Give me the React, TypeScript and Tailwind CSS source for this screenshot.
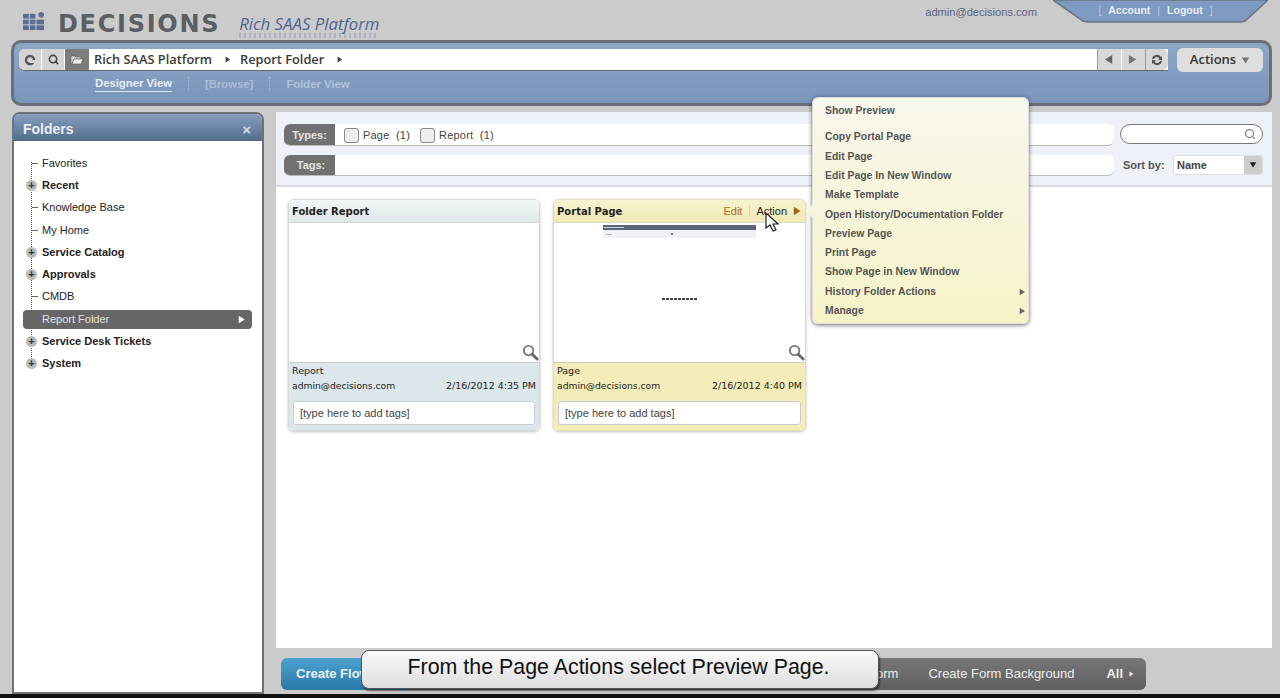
import { Search } from "lucide-react";

const sans = "font-['Liberation_Sans',Arial,sans-serif]";

const folders = [
  { name: "Favorites", bold: false },
  { name: "Recent", bold: true },
  { name: "Knowledge Base", bold: false },
  { name: "My Home", bold: false },
  { name: "Service Catalog", bold: true },
  { name: "Approvals", bold: true },
  { name: "CMDB", bold: false },
  { name: "Report Folder", bold: false, active: true },
  { name: "Service Desk Tickets", bold: true },
  { name: "System", bold: true },
];

const menuItems = [
  "Copy Portal Page",
  "Edit Page",
  "Edit Page In New Window",
  "Make Template",
  "Open History/Documentation Folder",
  "Preview Page",
  "Print Page",
  "Show Page in New Window",
  "History Folder Actions",
  "Manage",
];

function Triangle({ dir, className }: { dir: "left" | "right" | "down"; className: string }) {
  const pts = dir === "left" ? "9,1 9,11 1,6" : dir === "right" ? "1,1 1,11 9,6" : "1,2 11,2 6,10";
  return (
    <svg viewBox="0 0 12 12" className={className}>
      <polygon points={pts} fill="currentColor" />
    </svg>
  );
}

function Magnifier() {
  return (
    <svg viewBox="0 0 18 18" className="absolute bottom-[1px] right-0 h-[17px] w-[17px]">
      <circle cx="7" cy="7" r="5" fill="#fff" stroke="#777" strokeWidth="2" />
      <line x1="11" y1="11" x2="16" y2="16" stroke="#666" strokeWidth="3" strokeLinecap="round" />
    </svg>
  );
}

function Card(props: {
  title: string;
  type: string;
  date: string;
  width: string;
  head: string;
  foot: string;
  border: string;
  children?: React.ReactNode;
  headRight?: React.ReactNode;
}) {
  return (
    <div className={`flex h-[232px] flex-col overflow-hidden rounded-md border shadow-[0_1px_3px_rgba(0,0,0,0.25)] ${props.width} ${props.border}`}>
      <div className={`flex h-[23px] shrink-0 items-center justify-between border-b border-[#d5d8d0] pl-[3px] pr-[4px] ${props.head}`}>
        <span className="font-['DejaVu_Sans',sans-serif] text-[10px] font-bold text-[#222]">{props.title}</span>
        {props.headRight}
      </div>
      <div className="relative flex-1 bg-white">
        {props.children}
        <Magnifier />
      </div>
      <div className={`h-[68px] shrink-0 border-t border-[#c9cdc0] px-[3px] pt-[1px] font-['DejaVu_Sans',sans-serif] text-[9.5px] text-[#222] ${props.foot}`}>
        <div className="leading-[14px]">{props.type}</div>
        <div className="flex justify-between leading-[15px]">
          <span className="text-[9.2px]">admin@decisions.com</span>
          <span>{props.date}</span>
        </div>
        <div className={`mx-[1px] mt-[8px] flex h-[24px] items-center rounded-[3px] border border-[#ccc] bg-white pl-[6px] text-[11px] text-[#444] ${sans}`}>
          [type here to add tags]
        </div>
      </div>
    </div>
  );
}

export default function App() {
  return (
    <div className={`relative flex h-[698px] w-[1280px] flex-col overflow-hidden bg-[#cbcbcb] ${sans}`}>
      {/* top strip */}
      <div className="flex h-[40px] shrink-0 items-start pl-[23px]">
        <svg viewBox="0 0 24 22" className="mt-[11px] h-[21px] w-[23px]">
          <g fill="#5c6f92">
            <rect x="0" y="3" width="6" height="5" />
            <rect x="7" y="3" width="6" height="5" />
            <rect x="0" y="9" width="6" height="5" />
            <rect x="7" y="9" width="6" height="5" />
            <rect x="14" y="9" width="8" height="5" />
            <rect x="0" y="15" width="6" height="5" />
            <rect x="7" y="15" width="6" height="5" />
            <rect x="14" y="15" width="8" height="5" />
            <circle cx="19" cy="4" r="3" />
          </g>
        </svg>
        <span className="ml-[12px] mt-[9px] font-['DejaVu_Sans',sans-serif] text-[24px] font-bold leading-[30px] tracking-[1.7px] text-[#5b5f63]">DECISIONS</span>
        <div className="relative ml-[19px] mt-[14px] font-['Open_Sans',sans-serif] text-[16.800px] italic leading-[20px] text-[#50648f]">
          Rich SAAS Platform
          {/* the logo text's reflection, smudged by the video */}
          <div className="absolute left-0 top-[19px] h-[5px] w-full bg-[repeating-linear-gradient(90deg,#50648f_0_2px,transparent_2px_5px)] opacity-25" />
        </div>
        <span className="ml-auto mr-[16px] mt-[5px] text-[11.100px] leading-[14px] text-[#5a6482]">admin@decisions.com</span>
        <div className="relative mr-[12px] flex h-[23px] w-[215px] items-center justify-center gap-[7px] pb-[2px] pr-[10px] text-[10.500px] font-bold text-[#e8eef6]">
          <svg viewBox="0 0 215 23" className="absolute inset-0 h-[23px] w-[215px]">
            <path d="M0 0L30 21Q33 22 36 22H186Q189 22 192 21L215 0Z" fill="#7f9ac0" stroke="#6b7481" strokeWidth="1.500" />
          </svg>
          <span className="relative font-normal text-[#b9c9de]">[</span>
          <span className="relative">Account</span>
          <span className="relative font-normal text-[#b9c9de]">|</span>
          <span className="relative">Logout</span>
          <span className="relative font-normal text-[#b9c9de]">]</span>
        </div>
      </div>

      {/* nav bar */}
      <div className="mx-[11px] mr-[8px] h-[66px] shrink-0 rounded-[10px] border-[3px] border-[#6b6f75] bg-gradient-to-b from-[#8ea6c6] to-[#7a95bb] px-[5px] pt-[5px]">
        <div className="flex items-center">
          <div className="flex h-[22px] flex-1 items-stretch overflow-hidden rounded-l-md border-b border-[#666] bg-white">
            <div className="flex w-[23px] items-center justify-center border-r border-white bg-[#d4d4d4]">
              <svg viewBox="0 0 12 12" className="h-[12px] w-[12px]">
                <circle cx="6" cy="6" r="4" fill="none" stroke="#555" strokeWidth="2.400" />
                <rect x="6" y="6" width="6" height="3" fill="#d4d4d4" />
              </svg>
            </div>
            <div className="flex w-[23px] items-center justify-center border-r border-white bg-[#d4d4d4]">
              <Search size={11} strokeWidth={3.5} color="#444" />
            </div>
            <div className="flex w-[24px] items-center justify-center bg-[#7c7c7c]">
              <svg viewBox="0 0 14 12" className="h-[12px] w-[14px]">
                <path d="M1 2h4l1 1h5v2H4L2 10H1z" fill="#ddd" stroke="#555" strokeWidth="0.600" />
                <path d="M4 5h9l-2 5H2z" fill="#eee" stroke="#555" strokeWidth="0.600" />
              </svg>
            </div>
            <div className="flex flex-1 items-center pl-[5px] font-['Open_Sans',sans-serif] text-[12.800px] font-semibold text-[#3a3a3a]">
              Rich SAAS Platform
              <Triangle dir="right" className="ml-[13px] mr-[8px] h-[7px] w-[7px] text-[#444]" />
              Report Folder
              <Triangle dir="right" className="ml-[13px] h-[7px] w-[7px] text-[#444]" />
            </div>
            <div className="flex w-[24px] items-center justify-center border-l border-[#999] bg-[#d8d8d8]">
              <Triangle dir="left" className="h-[11px] w-[11px] text-[#666]" />
            </div>
            <div className="flex w-[24px] items-center justify-center border-l border-white bg-[#d8d8d8]">
              <Triangle dir="right" className="h-[11px] w-[11px] text-[#777]" />
            </div>
            <div className="flex w-[23px] items-center justify-center rounded-r-md border-l border-[#999] bg-[#d8d8d8]">
              <svg viewBox="0 0 14 14" className="h-[14px] w-[14px]">
                <path d="M2 6a5 5 0 0 1 9-2l1-1v4H8l1.500-1.500A3 3 0 0 0 4 6zM12 8a5 5 0 0 1-9 2l-1 1V7h4L4.500 8.500A3 3 0 0 0 10 8z" fill="#555" />
              </svg>
            </div>
          </div>
          <div className="ml-[9px] mr-[1px] flex h-[24px] w-[86px] items-center justify-center gap-[5px] rounded-md bg-[#dedede] font-['Open_Sans',sans-serif] text-[13px] font-semibold text-[#333]">
            Actions
            <Triangle dir="down" className="h-[9px] w-[9px] text-[#777]" />
          </div>
        </div>
        <div className="flex items-center pl-[76px] pt-[3px] text-[11.300px] font-bold leading-[16px]">
          <span className="border-b border-[#dfe8f3] text-[#e6edf6]">Designer View</span>
          <span className="ml-[16px] h-[14px] border-l border-dotted border-[#a9bcd5]" />
          <span className="ml-[16px] text-[#a9bcd6]">[Browse]</span>
          <span className="ml-[16px] h-[14px] border-l border-dotted border-[#a9bcd5]" />
          <span className="ml-[16px] text-[#b0c3dc]">Folder View</span>
        </div>
      </div>

      {/* main */}
      <div className="mt-[6px] flex flex-1 pl-[12px] pr-[8px]">
        {/* folders */}
        <div className="flex h-[582px] w-[252px] shrink-0 flex-col overflow-hidden rounded-t-[8px] border-[2px] border-[#6f7276] bg-white">
          <div className="flex h-[27px] shrink-0 items-center justify-between bg-gradient-to-b from-[#87a0c0] to-[#546c8c] pl-[9px] pr-[11px] pt-[3px]">
            <span className="text-[14px] font-bold text-[#e9eef5]">Folders</span>
            <span className="text-[15px] font-bold leading-none text-[#d3dbe6]">×</span>
          </div>
          <div className="relative mt-[11px] pl-[9px] pr-[10px]">
            <div className="absolute bottom-[12px] left-[17px] top-[10px] border-l border-dotted border-[#555]" />
            {folders.map((f) => (
              <div key={f.name} className="relative flex h-[22.300px] items-center">
                <div
                  className={`flex flex-1 items-center rounded-[4px] pl-[19px] pr-[5px] text-[11px] leading-[19px] ${f.active ? "bg-[#666] text-[#e2e2e2]" : "text-[#222]"} ${f.bold ? "font-bold" : ""}`}
                >
                  <span className="flex-1">{f.name}</span>
                  {f.active && <Triangle dir="right" className="h-[9px] w-[9px] text-white" />}
                </div>
                {f.bold ? (
                  <span className="absolute left-[3px] flex h-[11px] w-[11px] items-center justify-center rounded-full bg-[#bbb] text-[11px] font-bold leading-none text-[#333]">+</span>
                ) : (
                  <span className="absolute left-[9px] w-[6px] border-t border-[#666]" />
                )}
              </div>
            ))}
          </div>
        </div>

        {/* content */}
        <div className="ml-[12px] flex flex-1 flex-col">
          <div className="h-[536px] bg-white">
            <div className="flex h-[75px] items-start border-b-[2px] border-[#d9dadb] bg-[#eef1f7] pl-[8px] pr-[9px] pt-[12px]">
              <div className="flex flex-1 flex-col gap-[9px]">
                <div className="flex h-[22px] overflow-hidden rounded-md border-b border-[#bbb] bg-white">
                  <div className="flex w-[51px] items-center justify-center bg-[#717171] pt-[1px] text-[11px] font-bold text-[#e4e4e4]">Types:</div>
                  <div className="flex items-center pl-[9px] pt-[1px] text-[11px] text-[#444]">
                    <span className="mr-[4px] h-[15px] w-[15px] rounded-[3px] border border-[#888] bg-[#eee]" />
                    <span className="mr-[10px] tracking-[0.2px]">Page&nbsp;&nbsp;(1)</span>
                    <span className="mr-[4px] h-[15px] w-[15px] rounded-[3px] border border-[#888] bg-[#eee]" />
                    <span className="tracking-[0.2px]">Report&nbsp;&nbsp;(1)</span>
                  </div>
                </div>
                <div className="flex h-[21px] overflow-hidden rounded-md border-b border-[#bbb] bg-white">
                  <div className="flex w-[51px] items-center justify-center bg-[#717171] pl-[3px] text-[11px] font-bold text-[#e4e4e4]">Tags:</div>
                </div>
              </div>
              <div className="ml-[6px] flex w-[143px] shrink-0 flex-col">
                <div className="flex h-[20px] items-center justify-end rounded-full border border-[#777] bg-white pr-[6px]">
                  <Search size={12} strokeWidth={2.5} color="#888" />
                </div>
                <div className="mt-[11px] flex items-center pl-[3px] text-[11px] font-bold text-[#555]">
                  <span className="whitespace-nowrap">Sort by:</span>
                  <div className="ml-auto flex h-[20px] w-[90px] items-center justify-between overflow-hidden rounded-[3px] border border-[#ddd] bg-white pl-[3px] text-[#444]">
                    Name
                    <span className="flex h-full w-[18px] items-center justify-center bg-[#ccc]">
                      <Triangle dir="down" className="h-[8px] w-[8px] text-[#222]" />
                    </span>
                  </div>
                </div>
              </div>
            </div>
            <div className="flex gap-[13px] pl-[12px] pt-[12px]">
              <Card
                title="Folder Report"
                type="Report"
                date="2/16/2012 4:35 PM"
                width="w-[252px]"
                head="bg-gradient-to-b from-[#f3f6f6] to-[#dfe8e8]"
                foot="bg-[#dbe7ea]"
                border="border-[#d5d9d9]"
              />
              <Card
                title="Portal Page"
                type="Page"
                date="2/16/2012 4:40 PM"
                width="w-[253px]"
                head="bg-gradient-to-b from-[#f6f2cf] to-[#f0e9b6]"
                foot="bg-[#f3ecb9]"
                border="border-[#e3ddb0]"
                headRight={
                  <span className={`flex items-center text-[11px] ${sans}`}>
                    <span className="text-[#a86a14]">Edit</span>
                    <span className="ml-[7px] mr-[6px] h-[12px] border-l border-[#ddd6a8]" />
                    <span className="mr-[6px] text-[#222]">Action</span>
                    <Triangle dir="right" className="-mr-[2px] h-[10px] w-[10px] text-[#a0660f]" />
                  </span>
                }
              >
                <div className="ml-[49px] w-[153px] pt-[2px]">
                  <div className="flex h-[5px] items-center bg-[#5b6678] pl-[1px]">
                    <span className="h-[1px] w-[20px] bg-[#ccd]" />
                  </div>
                  <div className="flex h-[8px] items-center justify-between bg-[#eef1f6] px-[3px]">
                    <span className="h-[1px] w-[6px] bg-[#bbb]" />
                    <span className="mr-[80px] h-[2px] w-[2px] bg-[#777]" />
                  </div>
                </div>
                <div className="mt-[60px] flex justify-center">
                  <span className="h-[2px] w-[36px] bg-[repeating-linear-gradient(90deg,#444_0_3px,transparent_3px_4px)]" />
                </div>
              </Card>
            </div>
          </div>
          {/* create bar */}
          <div className="ml-[5px] mt-[10px] flex h-[32px] items-center">
            <div className="flex h-full w-[122px] items-center rounded-l-md bg-gradient-to-b from-[#4da3d0] to-[#2a78a8] pl-[15px] text-[13px] font-bold text-[#e9f3f9]">
              Create Flow
            </div>
            <div className="flex h-full w-[743px] items-center justify-end rounded-r-md bg-gradient-to-b from-[#777] to-[#5f5f5f] pr-[11px] text-[13px] text-[#eee]">
              <span className="mr-[30px]">Create Form</span>
              <span className="mr-[32px]">Create Form Background</span>
              <span className="font-bold">All</span>
              <Triangle dir="right" className="ml-[6px] h-[8px] w-[6px] text-[#eee]" />
            </div>
          </div>
        </div>
      </div>

      {/* black strip at the bottom of the video */}
      <div className="absolute bottom-0 left-0 h-[4px] w-full bg-[#111]" />

      {/* actions menu */}
      <div className="absolute left-[812px] top-[97px] h-[227px] w-[217px] rounded-md border border-[#ddd] bg-gradient-to-b from-[#f8f7ec] to-[#f6f3c8] pl-[12px] text-[10.400px] font-bold text-[#555] shadow-[0_1px_4px_rgba(0,0,0,0.6)]">
        <div className="mt-[3px] flex h-[19px] items-center">Show Preview</div>
        <div className="mt-[7.500px]">
          {menuItems.map((m) => (
            <div key={m} className="flex h-[19.300px] items-center justify-between pr-[1px]">
              {m}
              {(m === "Manage" || m === "History Folder Actions") && (
                <Triangle dir="right" className="h-[10px] w-[8px] text-[#666]" />
              )}
            </div>
          ))}
        </div>
        <div className="absolute left-[-7px] top-[106px] h-0 w-0 border-y-[7px] border-r-[7px] border-y-transparent border-r-[#f7f5da]" />
      </div>

      {/* cursor */}
      <svg viewBox="0 0 14 20" className="absolute left-[765px] top-[212px] h-[20px] w-[14px]">
        <path d="M1 1v15l4-3 3 6 3-1-3-6h5z" fill="#fff" stroke="#222" strokeWidth="1.200" />
      </svg>

      {/* caption */}
      <div className="absolute left-[361px] top-[650px] flex h-[39px] w-[518px] items-center justify-center rounded-lg border border-[#555] bg-gradient-to-b from-[#fafafa] to-[#dedede] pb-[5px] pr-[3px] text-[21.400px] text-[#111] shadow-[1px_2px_2px_rgba(0,0,0,0.5)]">
        From the Page Actions select Preview Page.
      </div>
    </div>
  );
}
